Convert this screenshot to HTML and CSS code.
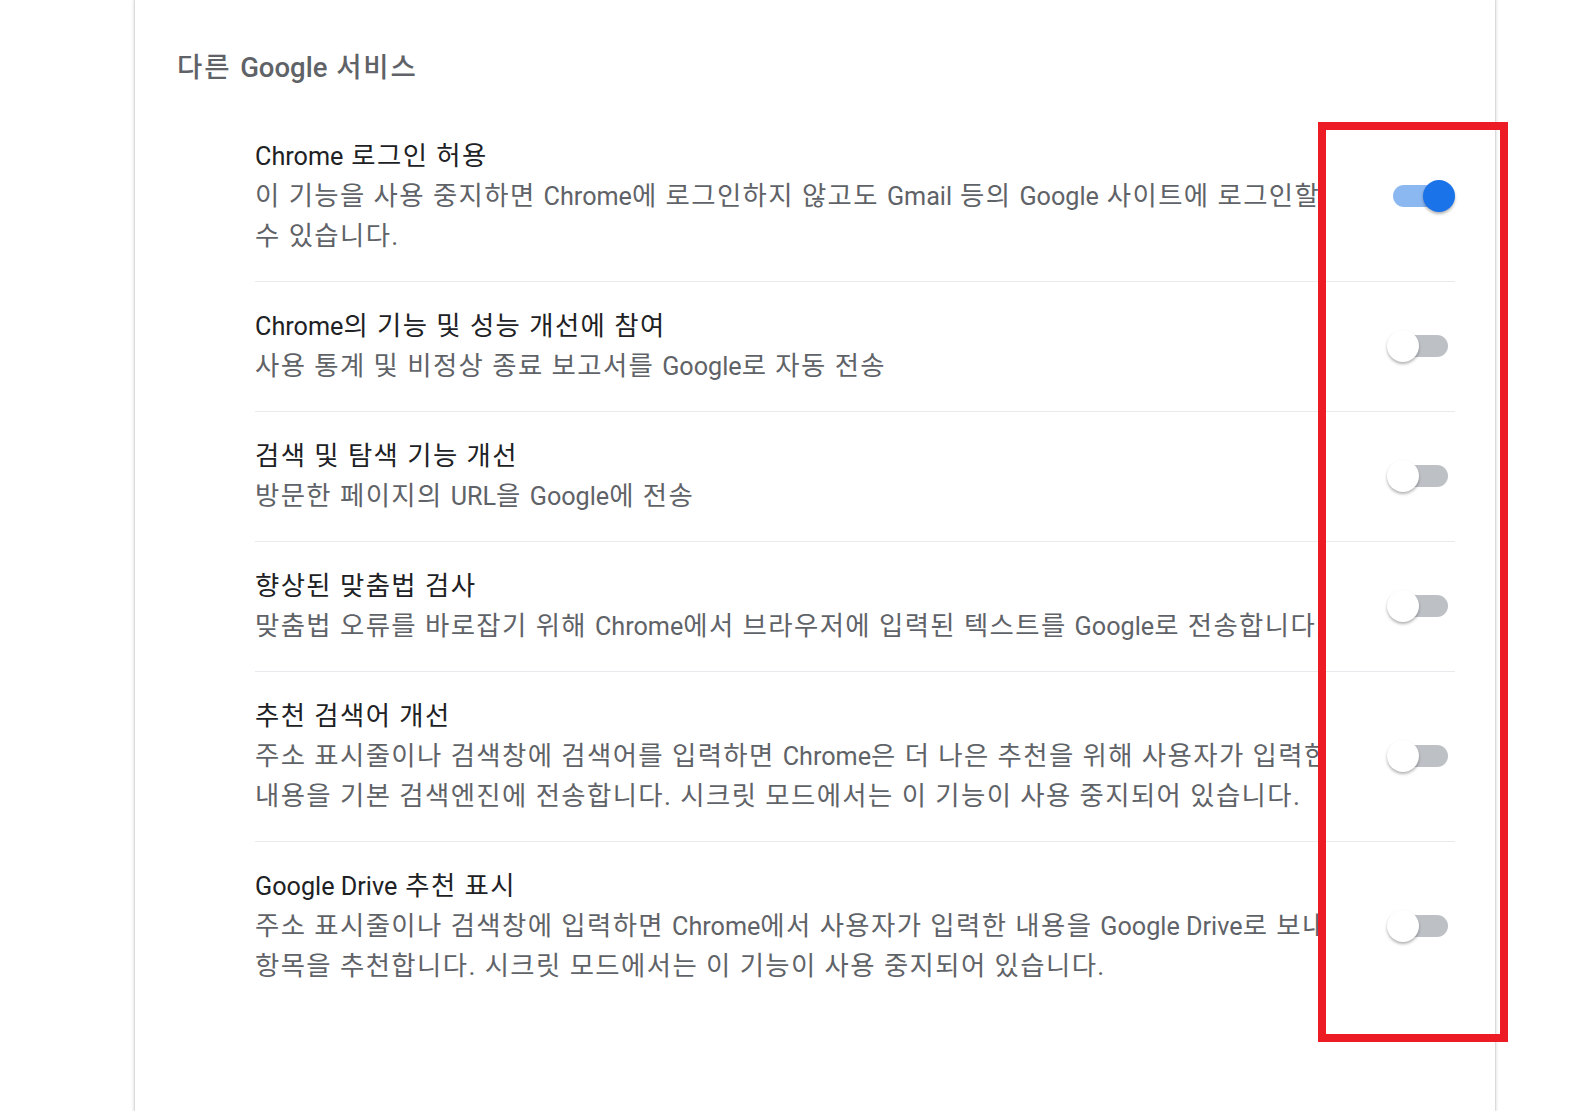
FILE: index.html
```html
<!DOCTYPE html>
<html lang="ko">
<head>
<meta charset="utf-8">
<title>다른 Google 서비스</title>
<link rel="stylesheet" href="styles.css">
</head>
<body>
<div class="card">
  <h2 class="section-title">다른 <span class="lat">Google</span> 서비스</h2>
  <div class="list">
    <div class="row">
      <div class="text">
        <div class="label"><span class="lat">Chrome</span> 로그인 허용</div>
        <div class="sub">이 기능을 사용 중지하면 <span class="lat">Chrome</span>에 로그인하지 않고도 <span class="lat">Gmail</span> 등의 <span class="lat">Google</span> 사이트에 로그인할<br>수 있습니다.</div>
      </div>
      <span class="toggle on"><span class="knob"></span></span>
    </div>
    <div class="row">
      <div class="text">
        <div class="label"><span class="lat">Chrome</span>의 기능 및 성능 개선에 참여</div>
        <div class="sub">사용 통계 및 비정상 종료 보고서를 <span class="lat">Google</span>로 자동 전송</div>
      </div>
      <span class="toggle"><span class="knob"></span></span>
    </div>
    <div class="row">
      <div class="text">
        <div class="label">검색 및 탐색 기능 개선</div>
        <div class="sub">방문한 페이지의 <span class="lat">URL</span>을 <span class="lat">Google</span>에 전송</div>
      </div>
      <span class="toggle"><span class="knob"></span></span>
    </div>
    <div class="row">
      <div class="text">
        <div class="label">향상된 맞춤법 검사</div>
        <div class="sub">맞춤법 오류를 바로잡기 위해 <span class="lat">Chrome</span>에서 브라우저에 입력된 텍스트를 <span class="lat">Google</span>로 전송합니다.</div>
      </div>
      <span class="toggle"><span class="knob"></span></span>
    </div>
    <div class="row">
      <div class="text">
        <div class="label">추천 검색어 개선</div>
        <div class="sub">주소 표시줄이나 검색창에 검색어를 입력하면 <span class="lat">Chrome</span>은 더 나은 추천을 위해 사용자가 입력한<br>내용을 기본 검색엔진에 전송합니다. 시크릿 모드에서는 이 기능이 사용 중지되어 있습니다.</div>
      </div>
      <span class="toggle"><span class="knob"></span></span>
    </div>
    <div class="row">
      <div class="text">
        <div class="label"><span class="lat">Google Drive</span> 추천 표시</div>
        <div class="sub">주소 표시줄이나 검색창에 입력하면 <span class="lat">Chrome</span>에서 사용자가 입력한 내용을 <span class="lat">Google Drive</span>로 보내<br>항목을 추천합니다. 시크릿 모드에서는 이 기능이 사용 중지되어 있습니다.</div>
      </div>
      <span class="toggle"><span class="knob"></span></span>
    </div>
  </div>
  <div class="annotation"></div>
</div>
</body>
</html>
```
FILE: styles.css
```css
html, body {
  margin: 0;
  padding: 0;
  background: #ffffff;
  height: 100%;
  overflow: hidden;
}

body {
  font-family: Roboto, "Noto Sans CJK KR", sans-serif;
  -webkit-font-smoothing: antialiased;
}

.card {
  position: relative;
  margin-left: 135px;
  width: 1360px;
  min-height: 100vh;
  box-sizing: border-box;
  padding: 48px 40px 0 42px;
  background: #ffffff;
  box-shadow: 0 0 3px 1px rgba(60, 64, 67, 0.22), 0 0 1px rgba(60, 64, 67, 0.3);
}

.section-title {
  margin: 0 0 23.5px 0;
  font-size: 27.5px;
  line-height: 40px;
  font-weight: 500;
  letter-spacing: 1.9px;
  color: #5f6368;
}

.section-title .lat {
  letter-spacing: 0;
}

.list {
  margin-left: 78px;
}

.row {
  display: flex;
  align-items: center;
  justify-content: space-between;
  padding: 24.5px 0;
  border-top: 1px solid #e8eaed;
}

.row:first-child {
  border-top: none;
}

.text {
  width: 1063px;
  overflow: hidden;
  white-space: nowrap;
}

.label,
.sub {
  font-size: 26.4px;
  line-height: 40px;
  letter-spacing: 1.4px;
}

.label {
  color: #202124;
}

.sub {
  color: #5f6368;
}

.label .lat,
.sub .lat {
  font-size: 25.2px;
  line-height: 1;
  letter-spacing: 0;
}

.toggle {
  position: relative;
  flex: none;
  width: 55px;
  height: 22px;
  margin-right: 7px;
  border-radius: 11px;
  background: #bdc1c6;
}

.toggle .knob {
  position: absolute;
  top: -5px;
  left: -6px;
  width: 32px;
  height: 32px;
  border-radius: 50%;
  background: #ffffff;
  box-shadow: 0 2px 3px rgba(0, 0, 0, 0.3);
}

.toggle.on {
  background: #8cb8f2;
}

.toggle.on .knob {
  left: 30px;
  background: #1a73e8;
}

.annotation {
  position: absolute;
  left: 1183px;
  top: 122px;
  width: 190px;
  height: 920px;
  box-sizing: border-box;
  border: 8px solid #ed1c24;
}
```
